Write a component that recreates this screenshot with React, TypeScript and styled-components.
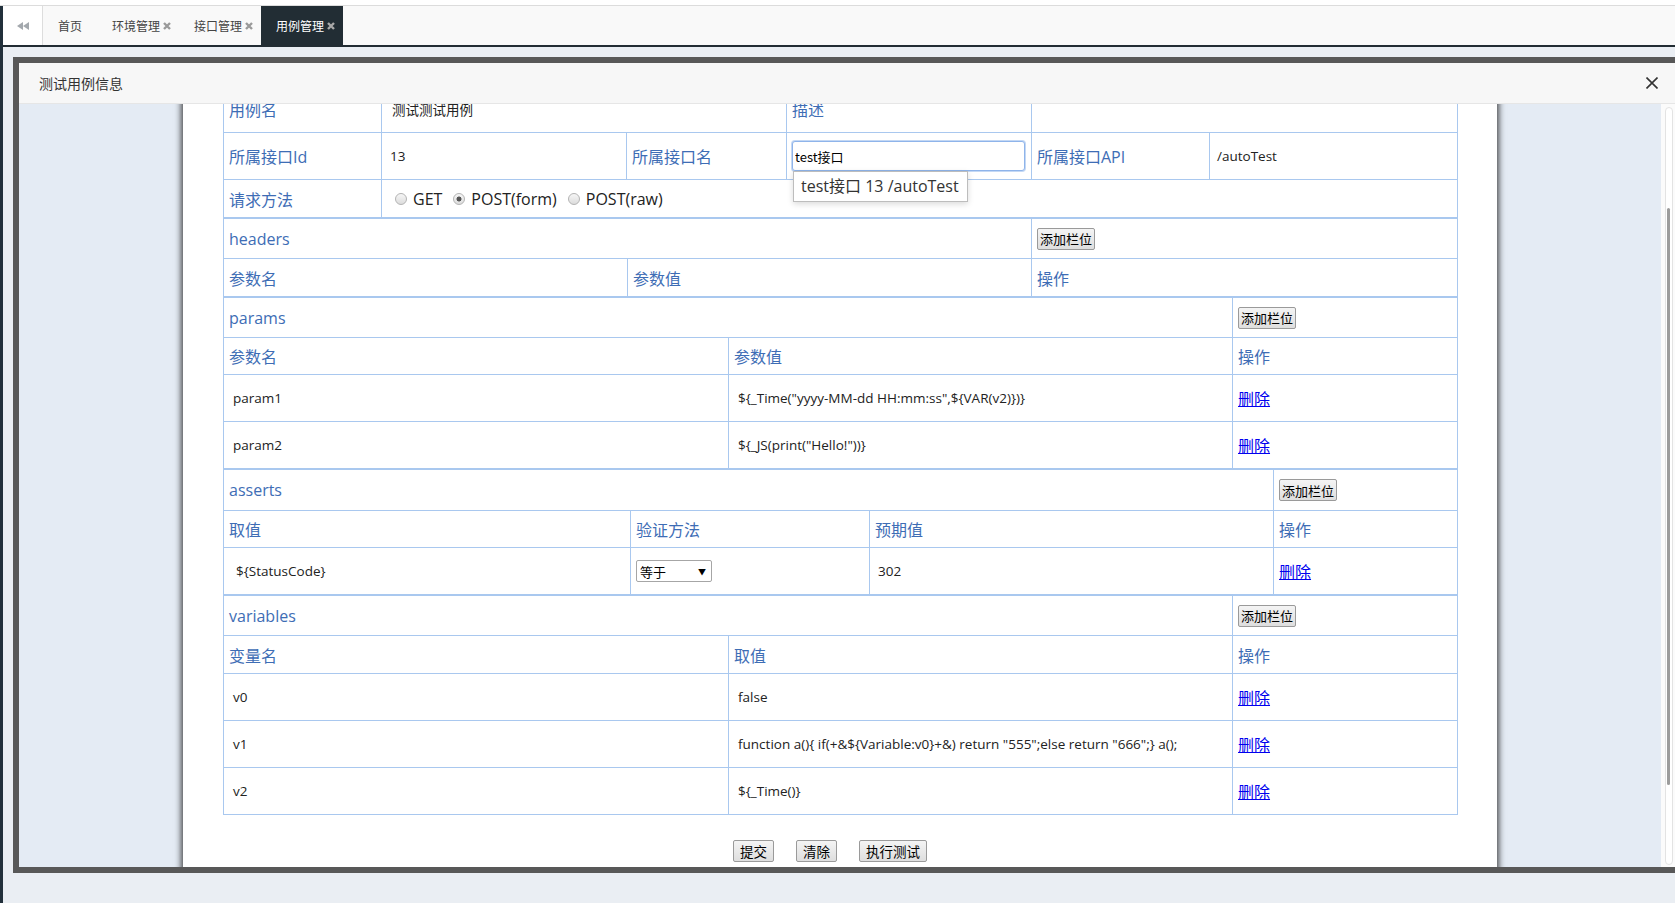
import React, { useLayoutEffect, useRef } from 'react'
import styled, { createGlobalStyle } from 'styled-components'

const GlobalStyle = createGlobalStyle`
  html, body { margin: 0; padding: 0; overflow: hidden; }
  body { font-family: "Noto Sans CJK SC", "Open Sans", sans-serif; background: #fff; }
`

const Page = styled.div`
  height: 903px;
  display: flex;
  flex-direction: column;
`
const TopLine = styled.div`
  flex: none;
  height: 5px;
  background: #fff;
  border-bottom: 1px solid #dcdcdc;
`
const Frame = styled.div`
  flex: 1;
  display: flex;
  min-height: 0;
`
const SideEdge = styled.div`
  flex: none;
  width: 3px;
  background: #22303b;
`
const Main = styled.div`
  flex: 1;
  display: flex;
  flex-direction: column;
  min-width: 0;
`
const TabBar = styled.div`
  flex: none;
  height: 39px;
  display: flex;
  background: #f9f9f9;
  border-bottom: 2px solid #222c33;
`
const BackTab = styled.div`
  width: 39px;
  border-right: 1px solid #dddddd;
  background: #fff;
  display: flex;
  align-items: center;
  justify-content: center;
`
const Tab = styled.div<{ $active?: boolean; $closable?: boolean }>`
  display: flex;
  align-items: center;
  padding: 0 ${p => (p.$closable ? 8 : 15)}px 0 15px;
  font-size: 12px;
  color: ${p => (p.$active ? '#fff' : '#444')};
  background: ${p => (p.$active ? '#222d34' : 'transparent')};
`
const TabClose = styled.svg`
  margin-left: 3px;
  width: 8px;
  height: 8px;
`
const Workspace = styled.div`
  flex: 1;
  min-height: 0;
  display: flex;
  background: #eaeef3;
  padding: 10px 0 30px 10px;
`
const Modal = styled.div`
  flex: 1;
  min-width: 0;
  display: flex;
  flex-direction: column;
  border: 6px solid #585858;
  border-right: none;
`
const ModalHead = styled.div`
  flex: none;
  height: 40px;
  display: flex;
  align-items: center;
  justify-content: space-between;
  padding: 0 17px 0 20px;
  background: #f7f7f7;
  border-bottom: 1px solid #e6e6e6;
  font-size: 14px;
  color: #333;
`
const ModalBody = styled.div`
  flex: 1;
  min-height: 0;
  display: flex;
`
const Scroller = styled.div`
  flex: 1;
  min-width: 0;
  overflow: hidden;
  background: #e4ebf4;
`
const Rail = styled.div`
  flex: none;
  width: 14px;
  background: #fbfbfb;
  display: flex;
`
const Track = styled.div`
  flex: 1;
  position: relative;
  margin: 3px 2px 2px 4px;
  border: 1px solid #e3e3e3;
  border-radius: 5px;
  background: #fff;
`
const Thumb = styled.div`
  position: absolute;
  left: 1px;
  right: 2px;
  border-radius: 3px;
  background: #9c9c9c;
`
const Panel = styled.div`
  width: 1314px;
  margin: 0 auto;
  box-sizing: border-box;
  padding: 121px 40px 113px;
  background: #fff;
  box-shadow: 0 0 6px 2px rgba(30, 30, 30, 0.8);
`
const Sheet = styled.table`
  width: 100%;
  table-layout: fixed;
  border-collapse: collapse;
  border: 1px solid #a9c8ef;
`
const Row = styled.tr<{ $h: number }>`
  height: ${p => p.$h}px;
`
const Cell = styled.td`
  border: 1px solid #a9c8ef;
  padding: 0 5px;
  vertical-align: middle;
  font-family: "Open Sans", "Noto Sans CJK SC", sans-serif;
  font-size: 13.5px;
  color: #222;
  white-space: nowrap;
  overflow: visible;
`
const Label = styled(Cell)`
  font-size: 16px;
  color: #3e6db5;
`
const Value = styled.span<{ $indent?: number }>`
  padding-left: ${p => p.$indent ?? 4}px;
`
const AddButton = styled.button`
  height: 22px;
  padding: 0 2px;
  font-family: "Noto Sans CJK SC", sans-serif;
  font-size: 13px;
  color: #000;
  background: linear-gradient(#f4f4f4, #dedede);
  border: 1px solid #9a9a9a;
  border-radius: 2px;
  vertical-align: middle;
`
const DeleteLink = styled.a`
  font-family: "Noto Sans CJK SC", sans-serif;
  font-size: 16px;
  color: #0000ee;
  text-decoration: underline;
`
const ApiField = styled.div`
  position: relative;
`
const ApiInput = styled.input`
  box-sizing: border-box;
  width: 233px;
  height: 30px;
  padding: 0 2px;
  border: 1px solid #8fb4ea;
  border-radius: 3px;
  box-shadow: 0 0 0 1px #c4d8f4;
  outline: none;
  font-family: "Noto Sans CJK SC", sans-serif;
  font-size: 13px;
  color: #000;
`
const Suggest = styled.div`
  position: absolute;
  left: 1px;
  top: 30px;
  z-index: 2;
  padding: 0 8px 0 7px;
  height: 29px;
  line-height: 29px;
  background: #fff;
  border: 1px solid #bdbdbd;
  box-shadow: 0 2px 6px rgba(0, 0, 0, 0.15);
  font-size: 16px;
  color: #333;
`
const Methods = styled.div`
  display: flex;
  align-items: center;
  font-size: 16px;
  color: #222;
`
const Option = styled.label`
  display: flex;
  align-items: center;
  margin-right: 3px;
`
const Radio = styled.input`
  appearance: none;
  margin: 0 6px 0 8px;
  width: 12px;
  height: 12px;
  border: 1px solid #b4b4b4;
  border-radius: 50%;
  box-sizing: border-box;
  background: linear-gradient(#f6f6f6, #dcdcdc);
  &:checked {
    background: radial-gradient(circle, #555 0 2.2px, transparent 2.8px), linear-gradient(#f6f6f6, #dcdcdc);
  }
`
const SelectWrap = styled.span`
  position: relative;
  display: inline-block;
  vertical-align: middle;
  &::after {
    content: '▼';
    position: absolute;
    right: 6px;
    top: 50%;
    transform: translateY(-50%);
    font-size: 8px;
    color: #000;
    pointer-events: none;
  }
`
const Picker = styled.select`
  appearance: none;
  width: 76px;
  height: 22px;
  padding: 0 0 0 3px;
  border: 1px solid #a6a6a6;
  border-radius: 2px;
  background: #fff;
  font-family: "Noto Sans CJK SC", sans-serif;
  font-size: 13px;
  color: #000;
`
const Actions = styled.div`
  margin-top: 25px;
  display: flex;
  justify-content: center;
  gap: 22px;
  padding-right: 20px;
`
const FormButton = styled.button`
  height: 22px;
  padding: 0 6px;
  font-family: "Noto Sans CJK SC", sans-serif;
  font-size: 13.5px;
  color: #000;
  background: linear-gradient(#f4f4f4, #dedede);
  border: 1px solid #9a9a9a;
  border-radius: 2px;
`

const Cols = ({ widths }: { widths: number[] }) => (
  <colgroup>
    {widths.map((w, i) => <col key={i} style={{ width: w }} />)}
  </colgroup>
)

const XIcon = ({ color }: { color: string }) => (
  <TabClose viewBox="0 0 8 8">
    <path d="M1 1 L7 7 M7 1 L1 7" stroke={color} strokeWidth="2.4" />
  </TabClose>
)

const params = [
  ['param1', '${_Time("yyyy-MM-dd HH:mm:ss",${VAR(v2)})}'],
  ['param2', '${_JS(print("Hello!"))}'],
]
const variables = [
  ['v0', 'false'],
  ['v1', 'function a(){ if(+&${Variable:v0}+&) return "555";else return "666";} a();'],
  ['v2', '${_Time()}'],
]

const SectionTitle = ({ title, span, widths, h = 40 }: { title: string; span: number; widths: number[]; h?: number }) => (
  <Row $h={h}>
    <Label colSpan={span}>{title}</Label>
    <Cell colSpan={widths.length - span}><AddButton>添加栏位</AddButton></Cell>
  </Row>
)

export default function App() {
  const scroller = useRef<HTMLDivElement>(null)
  useLayoutEffect(() => {
    if (scroller.current) scroller.current.scrollTop = 140
  }, [])

  const pw = [505, 504, 225]
  const aw = [407, 239, 404, 184]
  const hw = [404, 404, 426]

  return (
    <Page>
      <GlobalStyle />
      <TopLine />
      <Frame>
        <SideEdge />
        <Main>
          <TabBar>
            <BackTab>
              <svg width="12" height="8" viewBox="0 0 12 8">
                <polygon points="6,0 0,4 6,8" fill="#a3a8ad" />
                <polygon points="12,0 6,4 12,8" fill="#a3a8ad" />
              </svg>
            </BackTab>
            <Tab>首页</Tab>
            <Tab $closable>环境管理<XIcon color="#9a9a9a" /></Tab>
            <Tab $closable>接口管理<XIcon color="#9a9a9a" /></Tab>
            <Tab $closable $active>用例管理<XIcon color="#a8a8a8" /></Tab>
          </TabBar>
          <Workspace>
            <Modal>
              <ModalHead>
                <span>测试用例信息</span>
                <svg width="12" height="12" viewBox="0 0 12 12">
                  <path d="M0.5 0.5 L11.5 11.5 M11.5 0.5 L0.5 11.5" stroke="#333" strokeWidth="1.6" />
                </svg>
              </ModalHead>
              <ModalBody>
                <Scroller ref={scroller}>
                  <Panel>
                    <Sheet>
                      <Cols widths={[158, 245, 160, 245, 178, 248]} />
                      <tbody>
                        <Row $h={47}>
                          <Label>用例名</Label>
                          <Cell colSpan={2}><Value $indent={5}>测试测试用例</Value></Cell>
                          <Label>描述</Label>
                          <Cell colSpan={2} />
                        </Row>
                        <Row $h={47}>
                          <Label>所属接口Id</Label>
                          <Cell><Value $indent={3}>13</Value></Cell>
                          <Label>所属接口名</Label>
                          <Cell>
                            <ApiField>
                              <ApiInput defaultValue="test接口" />
                              <Suggest>test接口 13 /autoTest</Suggest>
                            </ApiField>
                          </Cell>
                          <Label>所属接口API</Label>
                          <Cell><Value $indent={2}>/autoTest</Value></Cell>
                        </Row>
                        <Row $h={38}>
                          <Label>请求方法</Label>
                          <Cell colSpan={5}>
                            <Methods>
                              <Option><Radio type="radio" name="m" />GET</Option>
                              <Option><Radio type="radio" name="m" defaultChecked />POST(form)</Option>
                              <Option><Radio type="radio" name="m" />POST(raw)</Option>
                            </Methods>
                          </Cell>
                        </Row>
                      </tbody>
                    </Sheet>

                    <Sheet>
                      <Cols widths={hw} />
                      <tbody>
                        <SectionTitle title="headers" span={2} widths={hw} />
                        <Row $h={38}>
                          <Label>参数名</Label>
                          <Label>参数值</Label>
                          <Label>操作</Label>
                        </Row>
                      </tbody>
                    </Sheet>

                    <Sheet>
                      <Cols widths={pw} />
                      <tbody>
                        <SectionTitle title="params" span={2} widths={pw} />
                        <Row $h={37}>
                          <Label>参数名</Label>
                          <Label>参数值</Label>
                          <Label>操作</Label>
                        </Row>
                        {params.map(([k, v]) => (
                          <Row $h={47} key={k}>
                            <Cell><Value>{k}</Value></Cell>
                            <Cell><Value>{v}</Value></Cell>
                            <Cell><DeleteLink href="#">删除</DeleteLink></Cell>
                          </Row>
                        ))}
                      </tbody>
                    </Sheet>

                    <Sheet>
                      <Cols widths={aw} />
                      <tbody>
                        <SectionTitle title="asserts" span={3} widths={aw} h={41} />
                        <Row $h={37}>
                          <Label>取值</Label>
                          <Label>验证方法</Label>
                          <Label>预期值</Label>
                          <Label>操作</Label>
                        </Row>
                        <Row $h={47}>
                          <Cell><Value $indent={7}>{'${StatusCode}'}</Value></Cell>
                          <Cell>
                            <SelectWrap>
                              <Picker defaultValue="eq">
                                <option value="eq">等于</option>
                              </Picker>
                            </SelectWrap>
                          </Cell>
                          <Cell><Value $indent={3}>302</Value></Cell>
                          <Cell><DeleteLink href="#">删除</DeleteLink></Cell>
                        </Row>
                      </tbody>
                    </Sheet>

                    <Sheet>
                      <Cols widths={pw} />
                      <tbody>
                        <SectionTitle title="variables" span={2} widths={pw} />
                        <Row $h={38}>
                          <Label>变量名</Label>
                          <Label>取值</Label>
                          <Label>操作</Label>
                        </Row>
                        {variables.map(([k, v]) => (
                          <Row $h={47} key={k}>
                            <Cell><Value>{k}</Value></Cell>
                            <Cell><Value>{v}</Value></Cell>
                            <Cell><DeleteLink href="#">删除</DeleteLink></Cell>
                          </Row>
                        ))}
                      </tbody>
                    </Sheet>

                    <Actions>
                      <FormButton>提交</FormButton>
                      <FormButton>清除</FormButton>
                      <FormButton>执行测试</FormButton>
                    </Actions>
                  </Panel>
                </Scroller>
                <Rail>
                  <Track>
                    <Thumb style={{ top: 100, height: 577 }} />
                  </Track>
                </Rail>
              </ModalBody>
            </Modal>
          </Workspace>
        </Main>
      </Frame>
    </Page>
  )
}
